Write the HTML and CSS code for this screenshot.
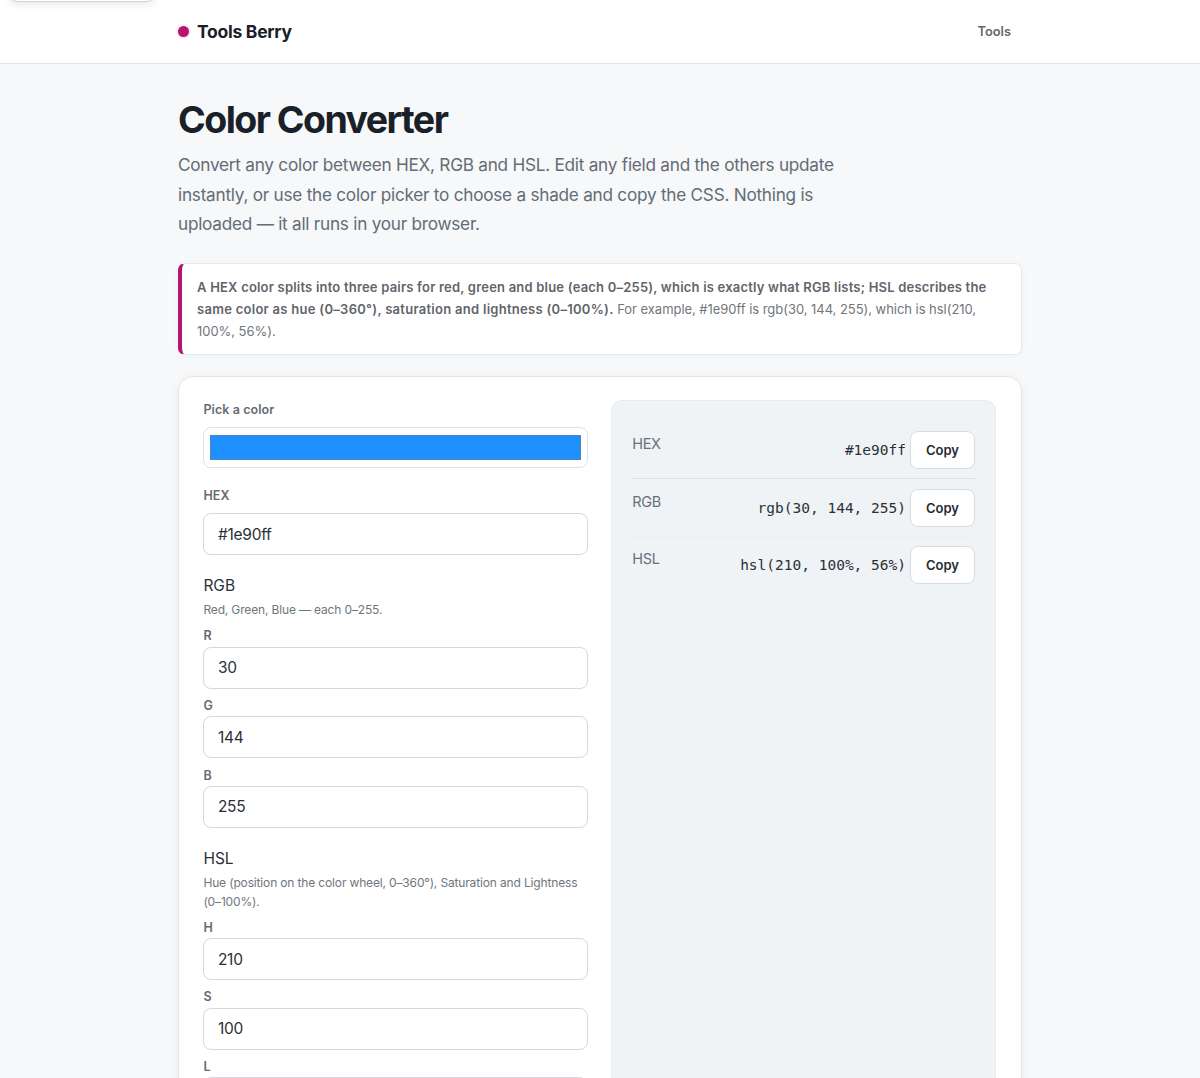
FILE: index.html
```
<!DOCTYPE html>
<html lang="en">
<head>
  <meta charset="UTF-8" />
  <meta name="viewport" content="width=device-width, initial-scale=1.0" />
  <title>Color Converter - Tools Berry</title>
  <link rel="stylesheet" href="styles.css">
</head>
<body>
  <a class="skip-link" href="#main" aria-label="Skip"></a>
  <header class="site-header">
    <div class="container header-inner">
      <a class="brand" href="#"><span class="brand-dot"></span><span class="brand-name">Tools Berry</span></a>
      <nav class="nav"><a href="#">Tools</a></nav>
    </div>
  </header>

  <main class="container" id="main">
    <h1>Color Converter</h1>
    <p class="lead">Convert any color between HEX, RGB and HSL. Edit any field and the others update<br>instantly, or use the color picker to choose a shade and copy the CSS. Nothing is<br>uploaded — it all runs in your browser.</p>

    <p class="answer"><strong>A HEX color splits into three pairs for red, green and blue (each 0–255), which is exactly what RGB lists; HSL describes the<br><span class="answer-second">same color as hue (0–360°), saturation and lightness (0–100%).</span></strong> For example, #1e90ff is rgb(30, 144, 255), which is hsl(210,<br>100%, 56%).</p>

    <section class="tool">
      <form class="fields">
        <div class="field">
          <label for="picker">Pick a color</label>
          <div class="picker" id="picker"><div class="swatch"></div></div>
        </div>
        <div class="field">
          <label for="hex">HEX</label>
          <input type="text" id="hex" value="#1e90ff">
        </div>

        <div class="group">
          <div class="group-title">RGB</div>
          <p class="hint">Red, Green, Blue — each 0–255.</p>
          <div class="sub"><label for="r">R</label><input type="text" id="r" value="30"></div>
          <div class="sub"><label for="g">G</label><input type="text" id="g" value="144"></div>
          <div class="sub"><label for="b">B</label><input type="text" id="b" value="255"></div>
        </div>

        <div class="group">
          <div class="group-title">HSL</div>
          <p class="hint">Hue (position on the color wheel, 0–360°), Saturation and Lightness<br>(0–100%).</p>
          <div class="sub"><label for="h">H</label><input type="text" id="h" value="210"></div>
          <div class="sub"><label for="s">S</label><input type="text" id="s" value="100"></div>
          <div class="sub"><label for="l">L</label><input type="text" id="l" value="56"></div>
        </div>
      </form>

      <div class="results">
        <div class="row">
          <span class="key">HEX</span>
          <span class="value"><code>#1e90ff</code><button type="button">Copy</button></span>
        </div>
        <div class="row">
          <span class="key">RGB</span>
          <span class="value"><code>rgb(30, 144, 255)</code><button type="button">Copy</button></span>
        </div>
        <div class="row">
          <span class="key">HSL</span>
          <span class="value"><code>hsl(210, 100%, 56%)</code><button type="button">Copy</button></span>
        </div>
      </div>
    </section>
  </main>
</body>
</html>
```
FILE: styles.css
```
* {
  box-sizing: border-box;
}
body {
  margin: 0;
  height: 1078px;
  overflow: hidden;
  font-family: Inter, sans-serif;
  font-size: 15.5px;
  color: #1a2027;
  background: #f6f8fa;
}
a {
  color: inherit;
  text-decoration: none;
}
.container {
  width: 844px;
  margin: 0 auto;
}
.skip-link {
  position: absolute;
  top: -38px;
  left: 9px;
  width: 146px;
  height: 40px;
  background: #fff;
  border: 1px solid #d0d3d7;
  border-radius: 8px;
  box-shadow: 0 2px 8px rgba(20, 30, 40, 0.1);
}
.site-header {
  height: 64px;
  background: #fff;
  border-bottom: 1px solid #e3e6e9;
}
.header-inner {
  height: 63px;
  display: flex;
  align-items: center;
  justify-content: space-between;
}
.brand {
  display: flex;
  align-items: center;
  gap: 8px;
  font-size: 17.5px;
  font-weight: 700;
  letter-spacing: -0.27px;
}
.brand-dot {
  width: 11px;
  height: 11px;
  border-radius: 50%;
  background: #b5146f;
  box-shadow: 0 0 0 2px #fbeaf4;
}
.nav {
  padding: 0 11px 0 0;
  font-size: 12.8px;
  font-weight: 600;
  color: #62686e;
}
h1 {
  margin: 34px 0 0;
  font-size: 37.5px;
  line-height: 44px;
  font-weight: 700;
  letter-spacing: -1.55px;
}
.lead {
  margin: 8px 0 24.2px;
  font-size: 17.2px;
  line-height: 29.6px;
  letter-spacing: -0.25px;
  color: #646c74;
  white-space: nowrap;
}
.answer {
  margin: 0 0 21px;
  height: 92px;
  padding: 12px 15px;
  font-size: 13px;
  line-height: 22px;
  letter-spacing: -0.04px;
  color: #71767b;
  white-space: nowrap;
  background: #fff;
  border: 1px solid #e7eaed;
  border-left: 4px solid #b5146f;
  border-radius: 7px;
  box-shadow: 0 2px 8px rgba(20, 30, 40, 0.03);
}
.answer strong {
  font-weight: 600;
  letter-spacing: 0.2px;
  color: #5f656b;
}
.answer-second {
  letter-spacing: 0.28px;
}
.tool {
  display: grid;
  grid-template-columns: 1fr 1fr;
  gap: 23px;
  padding: 23.5px 25px 24px 24.4px;
  background: #fff;
  border: 1px solid #e3e6e9;
  border-radius: 15px;
  box-shadow: 0 2px 10px rgba(20, 30, 40, 0.05);
}
.field {
  margin-bottom: 18px;
}
label {
  display: block;
  font-size: 12.5px;
  line-height: 20px;
  font-weight: 600;
  letter-spacing: 0.08px;
  color: #666c72;
}
.field label {
  margin-bottom: 7px;
}
input {
  display: block;
  width: 100%;
  height: 42px;
  padding: 0 13.5px;
  font: inherit;
  letter-spacing: -0.25px;
  color: #2b3036;
  background: #fff;
  border: 1px solid #d5d9dd;
  border-radius: 8px;
}
.picker {
  height: 41px;
  padding: 7px 6px;
  border: 1px solid #dfe2e5;
  border-radius: 8px;
}
.swatch {
  height: 25px;
  background: #1e90ff;
  border: 1px solid #5484b2;
}
.group {
  margin-bottom: 18px;
}
.group-title {
  line-height: 26px;
  color: #2b3036;
}
.hint {
  margin: 1px 0 7px;
  font-size: 12px;
  line-height: 19px;
  letter-spacing: -0.15px;
  color: #70767d;
  white-space: nowrap;
}
.sub {
  margin-bottom: 7.4px;
}
.sub label {
  padding-bottom: 0.2px;
}
.results {
  padding: 20px;
  background: #eff3f6;
  border: 1px solid #e7ebee;
  border-radius: 11px;
}
.row {
  display: flex;
  justify-content: space-between;
  padding: 9.5px 0 9.2px;
  border-bottom: 1px solid #dadfe3;
}
.row:nth-child(2) {
  border-color: #ebeff2;
}
.row:last-child {
  border-bottom: none;
}
.key {
  font-size: 14.5px;
  line-height: 25px;
  letter-spacing: -0.3px;
  color: #68717a;
}
.value {
  display: flex;
  align-items: center;
  gap: 4px;
}
code {
  font-family: "DejaVu Sans Mono", monospace;
  font-size: 14.5px;
  color: #2b3036;
}
button {
  width: 65px;
  height: 38px;
  padding: 0;
  font: 600 13px Inter, sans-serif;
  color: #262b30;
  background: #fff;
  border: 1px solid #d9dde1;
  border-radius: 8px;
}
```
